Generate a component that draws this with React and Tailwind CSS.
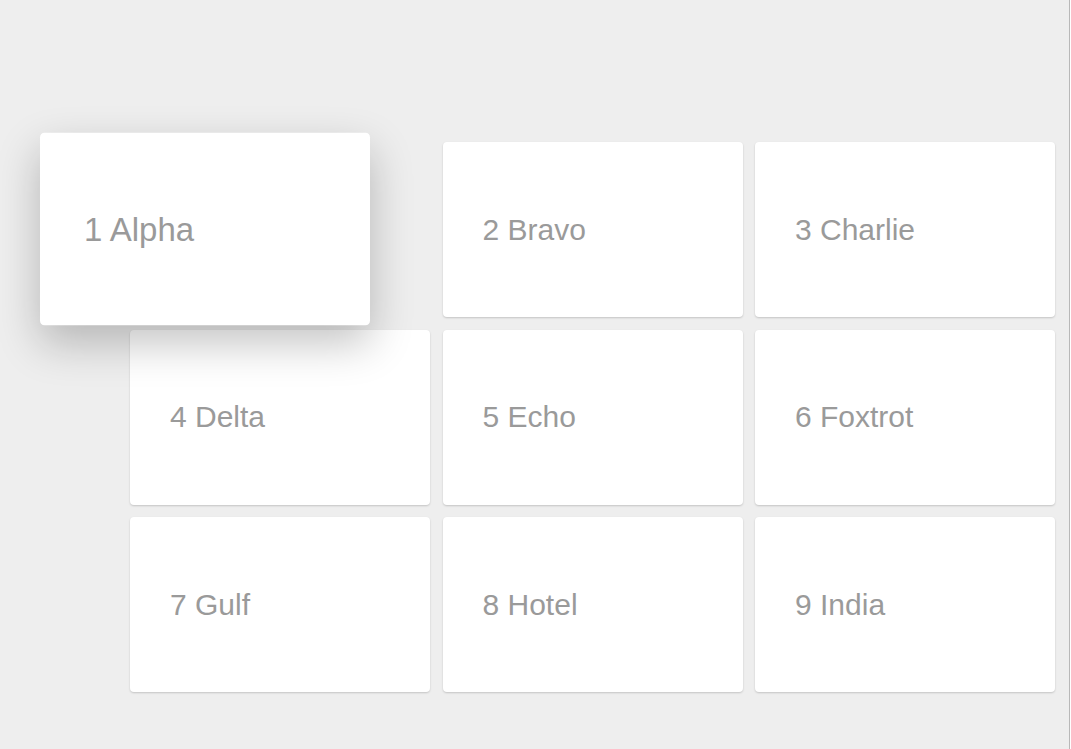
const items = [
  "1 Alpha",
  "2 Bravo",
  "3 Charlie",
  "4 Delta",
  "5 Echo",
  "6 Foxtrot",
  "7 Gulf",
  "8 Hotel",
  "9 India",
];

function Card({ label, dragging }) {
  return (
    <div
      className={
        dragging
          ? "relative z-10 flex h-[175px] items-center rounded-[4px] bg-white pl-10 -translate-x-[75px] -translate-y-[0.5px] scale-110 shadow-[0_16px_40px_rgba(0,0,0,0.24)]"
          : "flex h-[175px] items-center rounded-[4px] bg-white pl-10 shadow-[0_1px_2px_rgba(0,0,0,0.18)]"
      }
    >
      <span className="text-[30px] leading-none text-[#9a9a9a]">{label}</span>
    </div>
  );
}

export default function App() {
  return (
    <div
      className="h-[749px] w-[1070px] overflow-hidden border-r border-[#b8b8b8] bg-[#eeeeee]"
      style={{ fontFamily: '"Liberation Sans", Arial, sans-serif' }}
    >
      <div className="ml-[130px] grid w-[925px] grid-cols-3 gap-[12.5px] pt-[142px]">
        {items.map((label, i) => (
          <Card key={label} label={label} dragging={i === 0} />
        ))}
      </div>
    </div>
  );
}
